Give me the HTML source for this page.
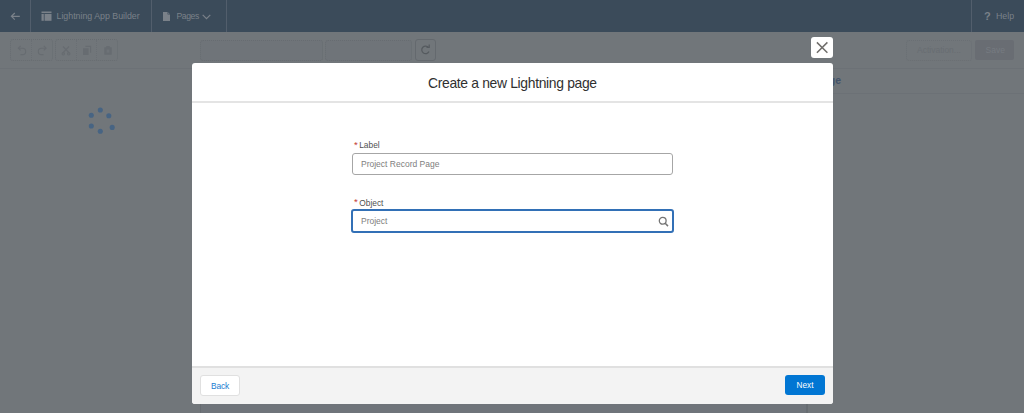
<!DOCTYPE html>
<html><head><meta charset="utf-8">
<style>
*{box-sizing:border-box;margin:0;padding:0}
html,body{width:1024px;height:413px;overflow:hidden}
body{background:#71767a;font-family:"Liberation Sans",sans-serif;position:relative}
.abs{position:absolute}
#hdr{left:0;top:0;width:1024px;height:32px;background:#3b4b5a}
.vdiv{position:absolute;top:0;width:1px;height:32px;background:#525e6c}
.htxt{position:absolute;color:#7a8189;font-size:8.8px;white-space:nowrap;line-height:1}
.tb{position:absolute;border:1px dotted #676c71;border-radius:3px}
.hline{position:absolute;height:1px;background:#6c7176}
#modal{left:192px;top:63px;width:641px;height:341px;background:#fff;border-radius:3px;overflow:hidden}
#mhead{position:absolute;left:0;top:0;width:641px;height:40px;border-bottom:2px solid #e4e4e4}
#mtitle{position:absolute;left:236px;top:13.5px;font-size:13.9px;letter-spacing:-0.33px;color:#303030;white-space:nowrap;line-height:1}
#mfoot{position:absolute;left:0;top:303px;width:641px;height:38px;background:#f3f3f3;border-top:2px solid #e0e0e0}
.lbl{position:absolute;font-size:8.4px;color:#505050;white-space:nowrap;line-height:1}
.req{color:#c23934;margin-right:1.5px;font-size:9.5px;position:relative;top:-0.5px}
.inp{position:absolute;background:#fff;border-radius:3px}
.ph{position:absolute;font-size:8.5px;color:#7e7e7e;white-space:nowrap;line-height:1}
.btn{position:absolute;border-radius:3px;font-size:8.2px;white-space:nowrap;line-height:1}
</style></head><body>
<div id="hdr" class="abs">
  <div class="vdiv" style="left:30px"></div>
  <div class="vdiv" style="left:151px"></div>
  <div class="vdiv" style="left:226px"></div>
  <div class="vdiv" style="left:971px"></div>
  <!-- back arrow -->
  <svg class="abs" style="left:10px;top:11px" width="11" height="10" viewBox="0 0 11 10"><path d="M9.8 5.3H1.8M4.8 2L1.4 5.3L4.8 8.6" stroke="#7a8189" stroke-width="1.2" fill="none"/></svg>
  <!-- app builder icon -->
  <svg class="abs" style="left:41px;top:11px" width="11" height="10" viewBox="0 0 11 10"><rect x="0.5" y="0.5" width="10" height="1.6" fill="#7a8189"/><rect x="0.5" y="3" width="2.3" height="6.8" fill="#7a8189"/><rect x="3.6" y="3" width="6.9" height="6.8" fill="#7a8189"/></svg>
  <div class="htxt" style="left:56.5px;top:12px">Lightning App Builder</div>
  <!-- page icon -->
  <svg class="abs" style="left:163px;top:12px" width="7" height="9" viewBox="0 0 7 9"><path d="M0 0H4.8L7 2.2V9H0Z" fill="#7a8189"/><path d="M4.8 0V2.2H7" fill="none" stroke="#3b4b5a" stroke-width="0.6"/></svg>
  <div class="htxt" style="left:176.5px;top:12px;letter-spacing:-0.4px;font-size:8.6px">Pages</div>
  <svg class="abs" style="left:201.5px;top:13.5px" width="9" height="6" viewBox="0 0 9 6"><path d="M0.7 0.8L4.5 4.6L8.3 0.8" stroke="#7a8189" stroke-width="1.2" fill="none"/></svg>
  <div class="htxt" style="left:984px;top:11px;font-size:11px;font-weight:bold">?</div>
  <div class="htxt" style="left:996px;top:12px">Help</div>
</div>

<div class="abs" style="left:200px;top:69px;width:608px;height:344px;background:#6f747a;border-left:1px solid #676c71;border-right:2px solid #676c71"></div>
<div class="abs" style="left:816px;top:75px;font-size:10.5px;font-weight:bold;color:#43536a;line-height:1;white-space:nowrap">Page</div>
<!-- toolbar -->
<div class="tb" style="left:10px;top:39px;width:43px;height:22px"></div>
<div class="abs" style="left:31px;top:40px;width:1px;height:20px;border-left:1px dotted #6a6f74"></div>
<div class="tb" style="left:55px;top:39px;width:63px;height:22px"></div>
<div class="abs" style="left:76px;top:40px;width:1px;height:20px;border-left:1px dotted #6a6f74"></div>
<div class="abs" style="left:96px;top:40px;width:1px;height:20px;border-left:1px dotted #6a6f74"></div>
<svg class="abs" style="left:10px;top:40px" width="108" height="22" fill="none" stroke="#676c71" stroke-width="1.1">
  <path d="M8.6 8.2H12.5A3.2 3.2 0 0 1 12.5 14.6H10.5"/><path d="M10.6 6L8.3 8.2L10.6 10.4"/>
  <path d="M36 8.2H31.5A3.2 3.2 0 0 0 31.5 14.6H33.5"/><path d="M33.8 6L36.1 8.2L33.8 10.4"/>
  <path d="M53 6.5L59.3 13M59 6.5L52.7 13"/><circle cx="53.3" cy="13.8" r="1.2"/><circle cx="58.7" cy="13.8" r="1.2"/>
  <rect x="73" y="8.3" width="5.6" height="6.7" fill="#676c71" stroke="none"/><path d="M75.4 6.4H80.6V12.8"/>
  <rect x="94.3" y="7.3" width="7.4" height="7.4" fill="#676c71" stroke="none"/><rect x="96.3" y="6" width="3.4" height="2" fill="#676c71" stroke="none"/><rect x="96.6" y="9.5" width="2.8" height="3.2" fill="#6e7378" stroke="none"/>
</svg>
<div class="tb" style="left:200px;top:40px;width:123px;height:21px;background:#6f7479"></div>
<div class="tb" style="left:325px;top:40px;width:87px;height:21px;background:#6f7479"></div>
<div class="tb" style="left:415px;top:39px;width:21px;height:22px;border-style:solid;border-color:#64696e"></div>
<svg class="abs" style="left:415px;top:39px" width="21" height="22" fill="none" stroke="#555a5f" stroke-width="1.2"><path d="M13.6 8.6A3.8 3.8 0 1 0 14 12.5"/><path d="M11.5 8.3H14.2V5.6" /></svg>
<div class="tb" style="left:906px;top:40px;width:66px;height:21px;border-color:#6a6f74"></div>
<div class="abs" style="left:917px;top:45.8px;font-size:8.5px;color:#686d72;line-height:1;white-space:nowrap">Activation...</div>
<div class="abs" style="left:975px;top:40px;width:39px;height:20px;background:#696d73;border-radius:2px"></div>
<div class="abs" style="left:985.5px;top:45.8px;font-size:8.5px;color:#767b81;line-height:1;white-space:nowrap">Save</div>
<div class="hline" style="left:0;top:68px;width:1024px"></div>
<div class="hline" style="left:833px;top:93px;width:191px"></div>

<!-- spinner -->
<svg class="abs" style="left:80px;top:100px" width="45" height="40">
  <g fill="#476483">
    <circle cx="20.3" cy="10" r="2.55"/><circle cx="28.8" cy="15.8" r="2.55"/><circle cx="32.2" cy="27.4" r="2.55"/>
    <circle cx="20.3" cy="31.3" r="2.55"/><circle cx="11.3" cy="26" r="2.55"/><circle cx="11.3" cy="15.2" r="2.55"/>
  </g>
</svg>

<!-- close button -->
<div class="abs" style="left:811px;top:37px;width:22px;height:21px;background:#fff;border-radius:3px"></div>
<svg class="abs" style="left:811px;top:37px" width="22" height="21"><path d="M5.9 5.4L16.4 15.8M16.4 5.4L5.9 15.8" stroke="#706e6b" stroke-width="1.5"/></svg>

<div id="modal" class="abs">
  <div id="mhead"><div id="mtitle">Create a new Lightning page</div></div>
  <div class="lbl" style="left:162px;top:77px"><span class="req">*</span>Label</div>
  <div class="inp" style="left:160px;top:90px;width:321px;height:22px;border:1px solid #a6a6a6"></div>
  <div class="ph" style="left:169px;top:97px">Project Record Page</div>
  <div class="lbl" style="left:162px;top:134.8px"><span class="req">*</span>Object</div>
  <div class="inp" style="left:159px;top:146px;width:323px;height:24px;border:2px solid #3270b6"></div>
  <div class="ph" style="left:169px;top:154px">Project</div>
  <svg class="abs" style="left:465px;top:152px" width="12" height="12" viewBox="0 0 12 12"><circle cx="5.7" cy="5.8" r="3.4" stroke="#747474" stroke-width="1.3" fill="none"/><path d="M8.2 8.3L11 11.1" stroke="#747474" stroke-width="1.5"/></svg>
  <div id="mfoot">
    <div class="btn" style="left:8px;top:7px;width:40px;height:21px;background:#fff;border:1px solid #e0e0e0;color:#1a7bd0;text-align:center;padding-top:6px;font-size:8.4px;letter-spacing:-0.2px">Back</div>
    <div class="btn" style="left:593px;top:7px;width:40px;height:20px;background:#0176d3;color:#fff;text-align:center;padding-top:7px">Next</div>
  </div>
</div>
</body></html>
